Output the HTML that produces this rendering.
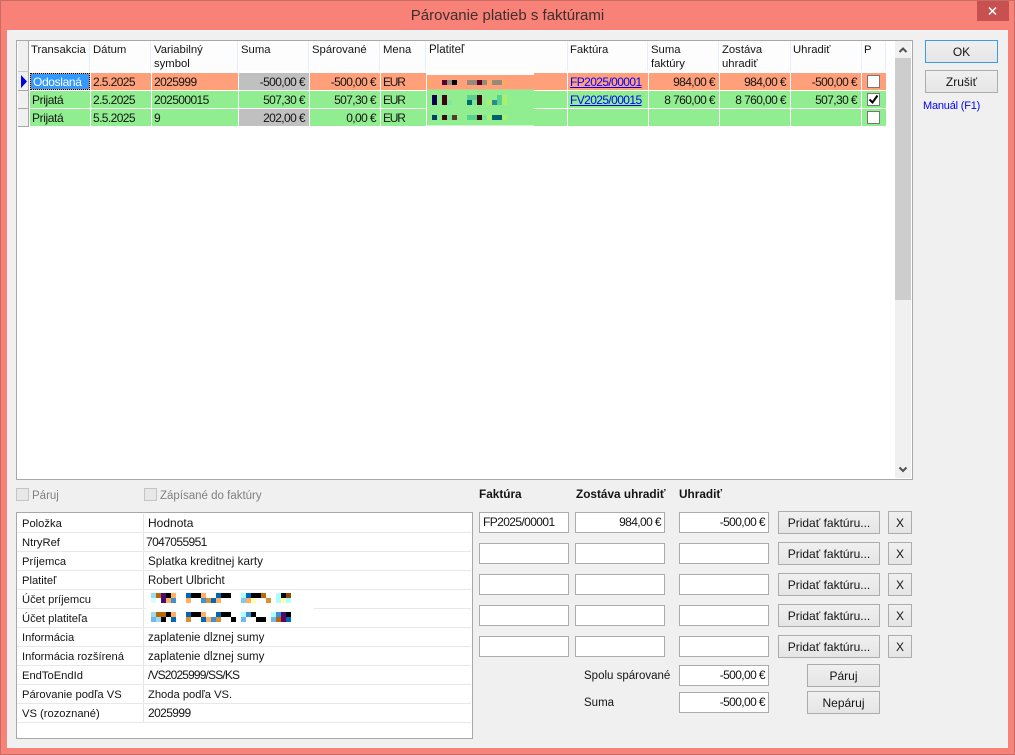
<!DOCTYPE html>
<html><head><meta charset="utf-8"><style>
html,body{margin:0;padding:0}
body{width:1015px;height:755px;overflow:hidden;position:relative;background:#f88278;font:11.5px/16px "Liberation Sans",sans-serif;color:#141414}
div,svg,span.a{position:absolute;box-sizing:border-box}
.t{white-space:nowrap}
.r{left:0;width:887px;height:17px}
.c{top:0;height:17px;line-height:18px;padding:0 2px;white-space:nowrap}
.o{background:#ffa07a}.g{background:#90ee90}.s{background:#c0c0c0}
.R{text-align:right;padding-right:4px}
.n{font-size:12px;letter-spacing:-.6px}
.e{font-size:12px;letter-spacing:-1.2px}
.lk{color:#0000ff;text-decoration:underline}
.h{top:41px;height:30px;background:#fdfdfd;border-right:1px solid #e6eef8;padding:3px 0 0 2px;line-height:13.500px;white-space:nowrap;font-size:11.300px}
.rh{left:18px;width:11px;background:#f0f0f0;border-right:1px solid #a8a8a8;border-bottom:1px solid #a8a8a8}
.cb{left:867px;width:13px;height:13px;background:#fff;border:1px solid #777}
.i{width:90px;height:21px;background:#fff;border:1px solid #acacac;line-height:19px;padding:0 3px;white-space:nowrap}
.b{background:linear-gradient(#f0f0f0,#e5e5e5);border:1px solid #acacac;text-align:center;white-space:nowrap;font-size:12px}
.add{left:778px;width:102px;height:23px;line-height:23px}
.x{left:888px;width:24px;height:23px;line-height:23px}
.l{left:17px;width:454px;height:1px;background:#e8e8e8}
.k{left:22px;white-space:nowrap;font-size:11.200px}.v{left:148px;white-space:nowrap}
.bold{font-weight:bold;white-space:nowrap;top:486px;font-size:11.800px}
</style></head><body>
<div style="left:0;top:0;width:1015px;height:755px;border:1px solid #c96b63"></div>
<div class="t" style="left:0;width:1015px;top:7px;text-align:center;font-size:15px;line-height:18px;color:#3f2e2c">Párovanie platieb s faktúrami</div>
<div style="left:977px;top:1px;width:32px;height:20px;background:#c75050"></div>
<svg style="left:977px;top:1px" width="32" height="20"><path d="M12 6.500l7 7M19 6.500l-7 7" stroke="#fff" stroke-width="1.500" fill="none"/></svg>
<div style="left:7px;top:30px;width:1001px;height:718px;background:#f0f0f0;border:1px solid #f4f4f4"></div>

<!-- main grid -->
<div style="left:16px;top:40px;width:897px;height:440px;background:#fff;border:1px solid #a8a8a8"></div>
<div style="left:18px;top:41px;width:11px;height:31px;background:#f0f0f0;border-right:1px solid #a8a8a8;border-bottom:1px solid #c8c8c8"></div>
<div class="h" style="left:29px;width:61px">Transakcia</div>
<div class="h" style="left:91px;width:60px">Dátum</div>
<div class="h" style="left:152px;width:86px">Variabilný<br>symbol</div>
<div class="h" style="left:239px;width:70px">Suma</div>
<div class="h" style="left:310px;width:70px">Spárované</div>
<div class="h" style="left:381px;width:45px">Mena</div>
<div class="h" style="left:427px;width:141px;font-size:11.500px">Platiteľ</div>
<div class="h" style="left:568px;width:80px">Faktúra</div>
<div class="h" style="left:649px;width:70px">Suma<br>faktúry</div>
<div class="h" style="left:720px;width:71px">Zostáva<br>uhradiť</div>
<div class="h" style="left:791px;width:71px">Uhradiť</div>
<div class="h" style="left:862px;width:24px">P</div>

<div class="rh" style="top:72px;height:19px"></div>
<div class="rh" style="top:91px;height:18px"></div>
<div class="rh" style="top:109px;height:18px"></div>
<svg style="left:20px;top:75px" width="8" height="13"><path d="M1 0l6 6.500-6 6.500z" fill="#0000e0"/></svg>

<div class="r" style="top:73px">
<div class="c" style="left:30px;width:60px;background:#3399ff;color:#fff;outline:1px dotted #000;outline-offset:-1px;background-clip:padding-box;border:1px solid #ffa07a;line-height:16px;padding:0 2px;font-size:12px;letter-spacing:-.35px">Odoslaná</div>
<div class="c o n" style="left:91px;width:60px">2.5.2025</div>
<div class="c o n" style="left:152px;width:86px">2025999</div>
<div class="c s R n" style="left:239px;width:70px">-500,00 €</div>
<div class="c o R n" style="left:310px;width:70px">-500,00 €</div>
<div class="c o e" style="left:381px;width:45px">EUR</div>
<div class="c o" style="left:427px;width:140px"></div>
<div class="c o n lk" style="left:568px;width:80px">FP2025/00001</div>
<div class="c o R n" style="left:649px;width:70px">984,00 €</div>
<div class="c o R n" style="left:720px;width:70px">984,00 €</div>
<div class="c o R n" style="left:791px;width:70px">-500,00 €</div>
<div class="c o" style="left:862px;width:24px"></div>
</div>
<div class="r" style="top:91px">
<div class="c g" style="left:30px;width:60px;font-size:12px;letter-spacing:-.4px">Prijatá</div>
<div class="c g n" style="left:91px;width:60px">2.5.2025</div>
<div class="c g n" style="left:152px;width:86px">202500015</div>
<div class="c g R n" style="left:239px;width:70px">507,30 €</div>
<div class="c g R n" style="left:310px;width:70px">507,30 €</div>
<div class="c g e" style="left:381px;width:45px">EUR</div>
<div class="c g" style="left:427px;width:140px"></div>
<div class="c g n lk" style="left:568px;width:80px">FV2025/00015</div>
<div class="c g R n" style="left:649px;width:70px">8 760,00 €</div>
<div class="c g R n" style="left:720px;width:70px">8 760,00 €</div>
<div class="c g R n" style="left:791px;width:70px">507,30 €</div>
<div class="c g" style="left:862px;width:24px"></div>
</div>
<div class="r" style="top:109px">
<div class="c g" style="left:30px;width:60px;font-size:12px;letter-spacing:-.4px">Prijatá</div>
<div class="c g n" style="left:91px;width:60px">5.5.2025</div>
<div class="c g n" style="left:152px;width:86px">9</div>
<div class="c s R n" style="left:239px;width:70px">202,00 €</div>
<div class="c g R n" style="left:310px;width:70px">0,00 €</div>
<div class="c g e" style="left:381px;width:45px">EUR</div>
<div class="c g" style="left:427px;width:140px"></div>
<div class="c g" style="left:568px;width:80px"></div>
<div class="c g" style="left:649px;width:70px"></div>
<div class="c g" style="left:720px;width:70px"></div>
<div class="c g" style="left:791px;width:70px"></div>
<div class="c g" style="left:862px;width:24px"></div>
</div>

<!-- payer redaction -->
<svg style="left:426px;top:70px" width="108" height="58" shape-rendering="crispEdges">
<g transform="translate(-426,-70)">
<rect x="426" y="70" width="108" height="58" fill="#fff"/>
<rect x="427" y="75" width="107" height="14.500" fill="#ffa07a"/>
<rect x="427" y="89.500" width="107" height="36" fill="#90ee90"/>
<rect x="427" y="80" width="5" height="5" fill="#ffa85f"/><rect x="442" y="80" width="5" height="5" fill="#5a0030"/><rect x="447" y="80" width="5" height="5" fill="#958a80"/><rect x="452" y="80" width="5" height="5" fill="#000"/><rect x="467" y="80" width="10" height="5" fill="#968a7c"/><rect x="477" y="80" width="5" height="5" fill="#5a0028"/><rect x="482" y="80" width="5" height="5" fill="#968a7c"/><rect x="487" y="80" width="5" height="5" fill="#ffa868"/><rect x="492" y="80" width="10" height="5" fill="#968a7c"/><rect x="502" y="80" width="5" height="5" fill="#ffa85f"/>
<rect x="432" y="95" width="5" height="10" fill="#0a0050"/><rect x="442" y="95" width="5" height="10" fill="#400010"/><rect x="447" y="100" width="5" height="5" fill="#7fe89a"/><rect x="467" y="95" width="10" height="5" fill="#58d090"/><rect x="467" y="100" width="5" height="5" fill="#006a70"/><rect x="472" y="100" width="5" height="5" fill="#78e898"/><rect x="477" y="95" width="5" height="10" fill="#3a0a10"/><rect x="487" y="100" width="5" height="5" fill="#a8f070"/><rect x="492" y="100" width="5" height="5" fill="#2a8a90"/><rect x="497" y="95" width="5" height="10" fill="#58d090"/><rect x="502" y="95" width="5" height="10" fill="#a8f070"/>
<rect x="432" y="115" width="5" height="5" fill="#004060"/><rect x="442" y="115" width="5" height="5" fill="#400808"/><rect x="447" y="115" width="5" height="5" fill="#78e898"/><rect x="452" y="115" width="5" height="5" fill="#5a3a20"/><rect x="467" y="115" width="10" height="5" fill="#58d090"/><rect x="477" y="115" width="5" height="5" fill="#3a0808"/><rect x="482" y="115" width="5" height="5" fill="#78e898"/><rect x="487" y="115" width="5" height="5" fill="#a8f070"/><rect x="492" y="115" width="10" height="5" fill="#006070"/><rect x="502" y="115" width="5" height="5" fill="#a8f070"/>
</g></svg>

<div class="cb" style="top:75px"></div>
<div class="cb" style="top:93px"></div>
<div class="cb" style="top:111px"></div>
<svg style="left:868px;top:94px" width="11" height="11"><path d="M1.500 5.500l3 3 5-7" stroke="#000" stroke-width="2" fill="none"/></svg>

<!-- scrollbar -->
<div style="left:895px;top:41px;width:16px;height:437px;background:#f0f0f0"></div>
<div style="left:895px;top:58px;width:16px;height:242px;background:#cdcdcd"></div>
<svg style="left:895px;top:41px" width="16" height="17"><path d="M4.500 11l3.500-3.500 3.500 3.500" stroke="#505050" stroke-width="2" fill="none"/></svg>
<svg style="left:895px;top:462px" width="16" height="16"><path d="M4.500 5.500l3.500 3.500 3.500-3.500" stroke="#505050" stroke-width="2" fill="none"/></svg>

<!-- right buttons -->
<div class="b" style="left:925px;top:40px;width:73px;height:23px;line-height:22px;border-color:#3c9be8">OK</div>
<div class="b" style="left:925px;top:70px;width:73px;height:23px;line-height:22px">Zrušiť</div>
<div class="t" style="left:923px;top:98px;color:#0000ff;font-size:11px;letter-spacing:-.2px">Manuál (F1)</div>

<!-- disabled checks -->
<div style="left:16px;top:488px;width:13px;height:13px;background:#e8e8e8;border:1px solid #c4c4c4"></div>
<div class="t" style="left:32px;top:488px;color:#808080">Páruj</div>
<div style="left:144px;top:488px;width:13px;height:13px;background:#e8e8e8;border:1px solid #c4c4c4"></div>
<div class="t" style="left:160px;top:488px;color:#808080">Zápísané do faktúry</div>

<!-- lower grid -->
<div style="left:16px;top:512px;width:457px;height:227px;background:#fff;border:1px solid #a8a8a8"></div>
<div style="left:143px;top:514px;width:1px;height:209px;background:#e4e4e4"></div>
<div class="l" style="top:532px"></div><div class="l" style="top:551px"></div><div class="l" style="top:570px"></div><div class="l" style="top:589px"></div><div class="l" style="top:608px"></div><div class="l" style="top:627px"></div><div class="l" style="top:646px"></div><div class="l" style="top:665px"></div><div class="l" style="top:684px"></div><div class="l" style="top:703px"></div><div class="l" style="top:722px"></div>
<div class="k" style="top:516px">Položka</div><div class="v" style="top:515px;font-size:12px">Hodnota</div>
<div class="k" style="top:535px">NtryRef</div><div class="v n" style="top:534px;left:146px">7047055951</div>
<div class="k" style="top:554px">Príjemca</div><div class="v" style="top:554px;font-size:11.700px">Splatka kreditnej karty</div>
<div class="k" style="top:573px">Platiteľ</div><div class="v" style="top:573px">Robert Ulbricht</div>
<div class="k" style="top:592px">Účet príjemcu</div>
<div class="k" style="top:611px">Účet platiteľa</div>
<div class="k" style="top:630px">Informácia</div><div class="v" style="top:630px">zaplatenie dlznej sumy</div>
<div class="k" style="top:649px">Informácia rozšírená</div><div class="v" style="top:649px">zaplatenie dlznej sumy</div>
<div class="k" style="top:668px">EndToEndId</div><div class="v" style="top:667px;font-size:12px;letter-spacing:-.85px">/VS2025999/SS/KS</div>
<div class="k" style="top:687px">Párovanie podľa VS</div><div class="v" style="top:687px;font-size:11.200px">Zhoda podľa VS.</div>
<div class="k" style="top:706px">VS (rozoznané)</div><div class="v n" style="top:705px">2025999</div>

<!-- account redaction -->
<svg style="left:146px;top:590px" width="168" height="37" shape-rendering="crispEdges">
<g transform="translate(-146,-590)">
<rect x="146" y="590" width="168" height="37" fill="#fff"/>
<rect x="151" y="593" width="5" height="5" fill="#a0d8f0"/><rect x="156" y="593" width="5" height="5" fill="#b86a08"/><rect x="161" y="593" width="5" height="10" fill="#4a0a70"/><rect x="166" y="593" width="5" height="5" fill="#000"/><rect x="171" y="593" width="5" height="5" fill="#ffb060"/>
<rect x="151" y="598" width="5" height="5" fill="#d8ffff"/><rect x="166" y="598" width="5" height="5" fill="#ffb060"/><rect x="171" y="598" width="5" height="5" fill="#4090d8"/>
<rect x="186" y="593" width="5" height="5" fill="#0068b8"/><rect x="191" y="593" width="10" height="5" fill="#000"/><rect x="201" y="593" width="5" height="5" fill="#ffb060"/><rect x="216" y="593" width="5" height="5" fill="#0068b8"/><rect x="221" y="593" width="10" height="5" fill="#000"/>
<rect x="186" y="598" width="5" height="5" fill="#ffb060"/><rect x="201" y="598" width="5" height="5" fill="#4090d8"/><rect x="206" y="598" width="5" height="5" fill="#d89030"/><rect x="211" y="598" width="5" height="5" fill="#0068b8"/><rect x="216" y="598" width="5" height="5" fill="#ffb060"/>
<rect x="241" y="593" width="5" height="5" fill="#b0ffff"/><rect x="246" y="593" width="5" height="5" fill="#0068b8"/><rect x="251" y="593" width="10" height="5" fill="#000"/><rect x="261" y="593" width="5" height="5" fill="#b86a08"/>
<rect x="241" y="598" width="5" height="5" fill="#80c8f0"/><rect x="246" y="598" width="5" height="5" fill="#ffb060"/><rect x="251" y="598" width="5" height="5" fill="#ffffb0"/><rect x="266" y="598" width="5" height="5" fill="#d89030"/>
<rect x="276" y="593" width="5" height="5" fill="#b0ffff"/><rect x="281" y="593" width="5" height="5" fill="#000"/><rect x="286" y="593" width="5" height="5" fill="#8a4a08"/>
<rect x="276" y="598" width="5" height="5" fill="#b0ffff"/><rect x="281" y="598" width="5" height="5" fill="#ffffb0"/><rect x="286" y="598" width="5" height="5" fill="#b0ffff"/>
<rect x="151" y="612" width="5" height="5" fill="#a0d8f0"/><rect x="156" y="612" width="10" height="5" fill="#b86a08"/><rect x="166" y="612" width="5" height="5" fill="#000"/><rect x="171" y="612" width="5" height="5" fill="#ffb060"/>
<rect x="151" y="617" width="5" height="5" fill="#70b8f0"/><rect x="156" y="617" width="5" height="5" fill="#a0d8f0"/><rect x="161" y="617" width="5" height="5" fill="#000"/><rect x="171" y="617" width="5" height="5" fill="#0068b8"/>
<rect x="186" y="612" width="5" height="5" fill="#0068b8"/><rect x="191" y="612" width="10" height="5" fill="#000"/><rect x="201" y="612" width="5" height="5" fill="#ffb060"/><rect x="216" y="612" width="5" height="5" fill="#0068b8"/><rect x="221" y="612" width="10" height="5" fill="#000"/>
<rect x="186" y="617" width="5" height="5" fill="#d89030"/><rect x="201" y="617" width="5" height="5" fill="#0068b8"/><rect x="206" y="617" width="5" height="5" fill="#ffb060"/><rect x="211" y="617" width="5" height="5" fill="#4090d8"/><rect x="216" y="617" width="5" height="5" fill="#d89030"/><rect x="231" y="617" width="5" height="5" fill="#000"/>
<rect x="241" y="612" width="5" height="5" fill="#b0ffff"/><rect x="246" y="612" width="5" height="5" fill="#4090d8"/><rect x="251" y="612" width="5" height="5" fill="#000"/>
<rect x="241" y="617" width="5" height="5" fill="#70b8f0"/><rect x="256" y="617" width="10" height="5" fill="#000"/>
<rect x="271" y="612" width="5" height="5" fill="#b0ffff"/><rect x="276" y="612" width="5" height="5" fill="#4090d8"/><rect x="281" y="612" width="5" height="5" fill="#4a0a70"/><rect x="286" y="612" width="5" height="5" fill="#000"/>
<rect x="271" y="617" width="5" height="5" fill="#70b8f0"/><rect x="276" y="617" width="5" height="5" fill="#b86a08"/><rect x="281" y="617" width="5" height="5" fill="#600060"/><rect x="286" y="617" width="5" height="5" fill="#0068b8"/>
</g></svg>

<!-- form -->
<div class="bold" style="left:479px">Faktúra</div>
<div class="bold" style="left:576px">Zostáva uhradiť</div>
<div class="bold" style="left:679px">Uhradiť</div>

<div class="i n" style="left:479px;top:512px">FP2025/00001</div>
<div class="i n" style="left:575px;top:512px;text-align:right">984,00 €</div>
<div class="i n" style="left:679px;top:512px;text-align:right">-500,00 €</div>
<div class="i" style="left:479px;top:543px"></div><div class="i" style="left:575px;top:543px"></div><div class="i" style="left:679px;top:543px"></div>
<div class="i" style="left:479px;top:574px"></div><div class="i" style="left:575px;top:574px"></div><div class="i" style="left:679px;top:574px"></div>
<div class="i" style="left:479px;top:605px"></div><div class="i" style="left:575px;top:605px"></div><div class="i" style="left:679px;top:605px"></div>
<div class="i" style="left:479px;top:636px"></div><div class="i" style="left:575px;top:636px"></div><div class="i" style="left:679px;top:636px"></div>

<div class="b add" style="top:511px">Pridať faktúru...</div><div class="b x" style="top:511px">X</div>
<div class="b add" style="top:542px">Pridať faktúru...</div><div class="b x" style="top:542px">X</div>
<div class="b add" style="top:573px">Pridať faktúru...</div><div class="b x" style="top:573px">X</div>
<div class="b add" style="top:604px">Pridať faktúru...</div><div class="b x" style="top:604px">X</div>
<div class="b add" style="top:635px">Pridať faktúru...</div><div class="b x" style="top:635px">X</div>

<div class="t" style="left:584px;top:668px">Spolu spárované</div>
<div class="i n" style="left:679px;top:665px;text-align:right">-500,00 €</div>
<div class="t" style="left:584px;top:695px">Suma</div>
<div class="i n" style="left:679px;top:692px;text-align:right">-500,00 €</div>
<div class="b" style="left:807px;top:664px;width:73px;height:23px;line-height:23px">Páruj</div>
<div class="b" style="left:807px;top:691px;width:73px;height:23px;line-height:23px">Nepáruj</div>
</body></html>
